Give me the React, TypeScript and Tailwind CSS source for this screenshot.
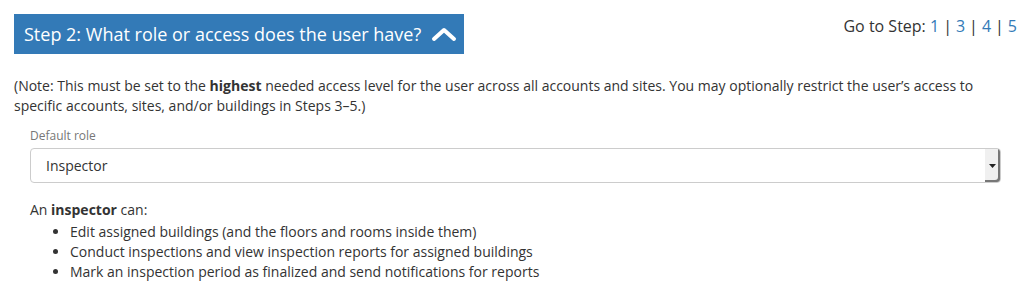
const font = { fontFamily: '"Open Sans", "Liberation Sans", sans-serif' };

const steps = ['1', '3', '4', '5'];

const abilities = [
  'Edit assigned buildings (and the floors and rooms inside them)',
  'Conduct inspections and view inspection reports for assigned buildings',
  'Mark an inspection period as finalized and send notifications for reports',
];

const App = (): JSX.Element => {
  return (
    <div className="min-h-[304px] bg-white px-[14px] pt-[14px] text-[14px] leading-[20px] text-[#333]" style={font}>
      <div className="flex items-start justify-between">
        <h2 className="flex h-[40px] w-[450px] items-center gap-[10px] bg-[#337ab7] pl-[10px] text-[18px] font-normal text-white">
          Step 2: What role or access does the user have?
          <svg width="26" height="16" viewBox="0 0 26 16" fill="none" aria-hidden="true">
            <path d="M3 13 L13 4 L23 13" stroke="white" strokeWidth="4" strokeLinecap="round" strokeLinejoin="round" />
          </svg>
        </h2>
        <div className="-mr-[6px] pt-[1px] text-[16px] leading-[22px] text-[#333]">
          Go to Step:{' '}
          {steps.map((s, i) => (
            <span key={s}>
              {i > 0 && <span className="px-[4px]">|</span>}
              <a href="#" className="text-[#337ab7]">{s}</a>
            </span>
          ))}
        </div>
      </div>

      <p className="mt-[22px] pr-[30px]">
        (Note: This must be set to the <strong className="font-bold">highest</strong> needed access level for the user across
        all accounts and sites. You may optionally restrict the user’s access to specific accounts, sites, and/or buildings in
        Steps 3–5.)
      </p>

      <div className="mt-[11px] pl-[16px] pr-[10px]">
        <label className="block text-[12px] leading-[17px] text-[#777]">Default role</label>
        <div className="mt-[4px] flex h-[35px] items-stretch rounded-[4px] border border-[#ccc] bg-white">
          <span className="flex flex-1 items-center pl-[15px] text-[14px] text-[#333]">Inspector</span>
          <span className="flex w-[15px] items-center justify-center rounded-r-[3px] bg-[#f0f0f0] shadow-[inset_-2px_-2px_0_#777]">
            <svg width="7" height="4" viewBox="0 0 7 4" aria-hidden="true">
              <path d="M0 0 H7 L3.5 4 Z" fill="#222" />
            </svg>
          </span>
        </div>
      </div>

      <div className="mt-[17px] pl-[16px]">
        <p>
          An <strong className="font-bold">inspector</strong> can:
        </p>
        <ul className="mt-[2px] list-disc pl-[40px]">
          {abilities.map((a) => (
            <li key={a}>{a}</li>
          ))}
        </ul>
      </div>
    </div>
  );
};

export default App;
